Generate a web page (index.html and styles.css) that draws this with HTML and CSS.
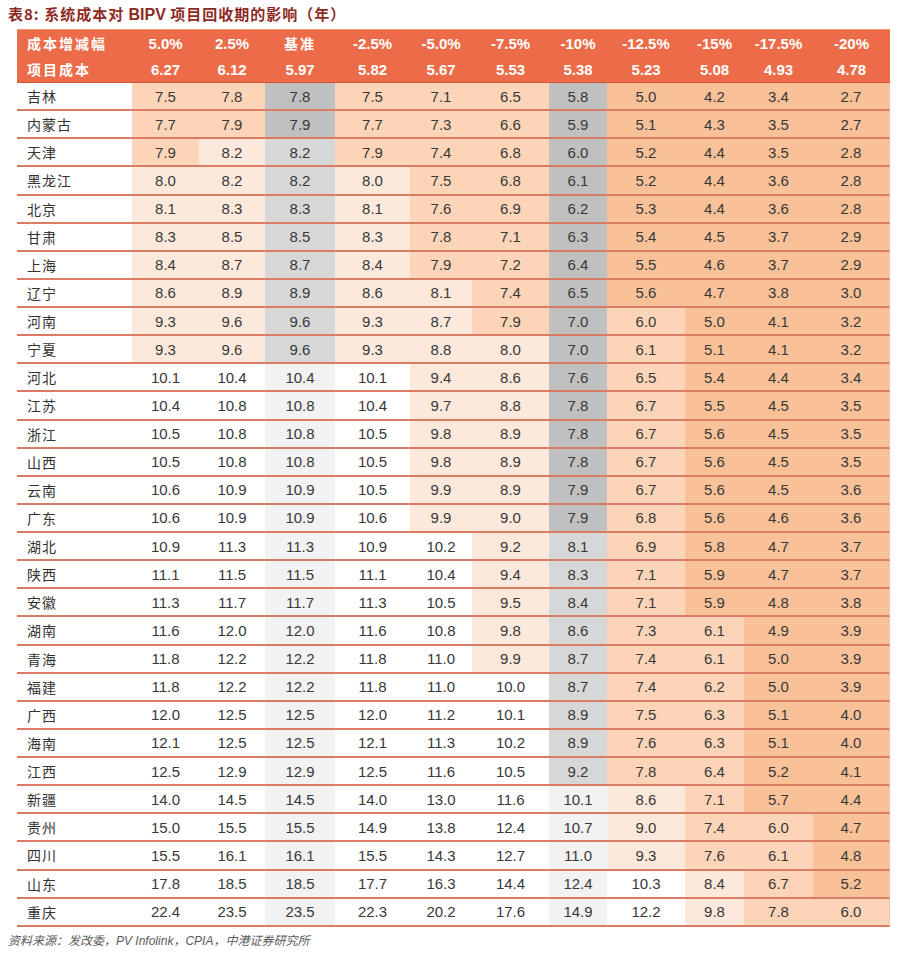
FILE: index.html
```html
<!DOCTYPE html>
<html lang="zh-CN">
<head>
<meta charset="utf-8">
<title>表8：系统成本对BIPV项目回收期的影响</title>
<link rel="stylesheet" href="styles.css">
</head>
<body>
<div class="page">
  <h1 class="title">表8: 系统成本对 <span class="latin">BIPV</span> 项目回收期的影响（年）</h1>
  <table class="heat">
    <colgroup>
      <col class="w-name"><col class="w1"><col class="w2"><col class="w3"><col class="w4"><col class="w5"><col class="w6"><col class="w7"><col class="w8"><col class="w9"><col class="w10"><col class="w11">
    </colgroup>
    <thead>
      <tr class="h1"><th class="label">成本增减幅</th><th>5.0%</th><th>2.5%</th><th class="cjk">基准</th><th>-2.5%</th><th>-5.0%</th><th>-7.5%</th><th>-10%</th><th>-12.5%</th><th>-15%</th><th>-17.5%</th><th>-20%</th></tr>
      <tr class="h2"><th class="label">项目成本</th><th>6.27</th><th>6.12</th><th>5.97</th><th>5.82</th><th>5.67</th><th>5.53</th><th>5.38</th><th>5.23</th><th>5.08</th><th>4.93</th><th>4.78</th></tr>
    </thead>
    <tbody>
      <tr><td class="name">吉林</td><td class="t2">7.5</td><td class="t2">7.8</td><td class="g1">7.8</td><td class="t2">7.5</td><td class="t2">7.1</td><td class="t2">6.5</td><td class="g1">5.8</td><td class="t1">5.0</td><td class="t1">4.2</td><td class="t1">3.4</td><td class="t1">2.7</td></tr>
      <tr><td class="name">内蒙古</td><td class="t2">7.7</td><td class="t2">7.9</td><td class="g1">7.9</td><td class="t2">7.7</td><td class="t2">7.3</td><td class="t2">6.6</td><td class="g1">5.9</td><td class="t1">5.1</td><td class="t1">4.3</td><td class="t1">3.5</td><td class="t1">2.7</td></tr>
      <tr><td class="name">天津</td><td class="t2">7.9</td><td class="t3">8.2</td><td class="g2">8.2</td><td class="t2">7.9</td><td class="t2">7.4</td><td class="t2">6.8</td><td class="g1">6.0</td><td class="t1">5.2</td><td class="t1">4.4</td><td class="t1">3.5</td><td class="t1">2.8</td></tr>
      <tr><td class="name">黑龙江</td><td class="t3">8.0</td><td class="t3">8.2</td><td class="g2">8.2</td><td class="t3">8.0</td><td class="t2">7.5</td><td class="t2">6.8</td><td class="g1">6.1</td><td class="t1">5.2</td><td class="t1">4.4</td><td class="t1">3.6</td><td class="t1">2.8</td></tr>
      <tr><td class="name">北京</td><td class="t3">8.1</td><td class="t3">8.3</td><td class="g2">8.3</td><td class="t3">8.1</td><td class="t2">7.6</td><td class="t2">6.9</td><td class="g1">6.2</td><td class="t1">5.3</td><td class="t1">4.4</td><td class="t1">3.6</td><td class="t1">2.8</td></tr>
      <tr><td class="name">甘肃</td><td class="t3">8.3</td><td class="t3">8.5</td><td class="g2">8.5</td><td class="t3">8.3</td><td class="t2">7.8</td><td class="t2">7.1</td><td class="g1">6.3</td><td class="t1">5.4</td><td class="t1">4.5</td><td class="t1">3.7</td><td class="t1">2.9</td></tr>
      <tr><td class="name">上海</td><td class="t3">8.4</td><td class="t3">8.7</td><td class="g2">8.7</td><td class="t3">8.4</td><td class="t2">7.9</td><td class="t2">7.2</td><td class="g1">6.4</td><td class="t1">5.5</td><td class="t1">4.6</td><td class="t1">3.7</td><td class="t1">2.9</td></tr>
      <tr><td class="name">辽宁</td><td class="t3">8.6</td><td class="t3">8.9</td><td class="g2">8.9</td><td class="t3">8.6</td><td class="t3">8.1</td><td class="t2">7.4</td><td class="g1">6.5</td><td class="t1">5.6</td><td class="t1">4.7</td><td class="t1">3.8</td><td class="t1">3.0</td></tr>
      <tr><td class="name">河南</td><td class="t3">9.3</td><td class="t3">9.6</td><td class="g2">9.6</td><td class="t3">9.3</td><td class="t3">8.7</td><td class="t2">7.9</td><td class="g1">7.0</td><td class="t2">6.0</td><td class="t1">5.0</td><td class="t1">4.1</td><td class="t1">3.2</td></tr>
      <tr><td class="name">宁夏</td><td class="t3">9.3</td><td class="t3">9.6</td><td class="g2">9.6</td><td class="t3">9.3</td><td class="t3">8.8</td><td class="t3">8.0</td><td class="g1">7.0</td><td class="t2">6.1</td><td class="t1">5.1</td><td class="t1">4.1</td><td class="t1">3.2</td></tr>
      <tr><td class="name">河北</td><td>10.1</td><td>10.4</td><td class="g3">10.4</td><td>10.1</td><td class="t3">9.4</td><td class="t3">8.6</td><td class="g1">7.6</td><td class="t2">6.5</td><td class="t1">5.4</td><td class="t1">4.4</td><td class="t1">3.4</td></tr>
      <tr><td class="name">江苏</td><td>10.4</td><td>10.8</td><td class="g3">10.8</td><td>10.4</td><td class="t3">9.7</td><td class="t3">8.8</td><td class="g1">7.8</td><td class="t2">6.7</td><td class="t1">5.5</td><td class="t1">4.5</td><td class="t1">3.5</td></tr>
      <tr><td class="name">浙江</td><td>10.5</td><td>10.8</td><td class="g3">10.8</td><td>10.5</td><td class="t3">9.8</td><td class="t3">8.9</td><td class="g1">7.8</td><td class="t2">6.7</td><td class="t1">5.6</td><td class="t1">4.5</td><td class="t1">3.5</td></tr>
      <tr><td class="name">山西</td><td>10.5</td><td>10.8</td><td class="g3">10.8</td><td>10.5</td><td class="t3">9.8</td><td class="t3">8.9</td><td class="g1">7.8</td><td class="t2">6.7</td><td class="t1">5.6</td><td class="t1">4.5</td><td class="t1">3.5</td></tr>
      <tr><td class="name">云南</td><td>10.6</td><td>10.9</td><td class="g3">10.9</td><td>10.5</td><td class="t3">9.9</td><td class="t3">8.9</td><td class="g1">7.9</td><td class="t2">6.7</td><td class="t1">5.6</td><td class="t1">4.5</td><td class="t1">3.6</td></tr>
      <tr><td class="name">广东</td><td>10.6</td><td>10.9</td><td class="g3">10.9</td><td>10.6</td><td class="t3">9.9</td><td class="t3">9.0</td><td class="g1">7.9</td><td class="t2">6.8</td><td class="t1">5.6</td><td class="t1">4.6</td><td class="t1">3.6</td></tr>
      <tr><td class="name">湖北</td><td>10.9</td><td>11.3</td><td class="g3">11.3</td><td>10.9</td><td>10.2</td><td class="t3">9.2</td><td class="g2">8.1</td><td class="t2">6.9</td><td class="t1">5.8</td><td class="t1">4.7</td><td class="t1">3.7</td></tr>
      <tr><td class="name">陕西</td><td>11.1</td><td>11.5</td><td class="g3">11.5</td><td>11.1</td><td>10.4</td><td class="t3">9.4</td><td class="g2">8.3</td><td class="t2">7.1</td><td class="t1">5.9</td><td class="t1">4.7</td><td class="t1">3.7</td></tr>
      <tr><td class="name">安徽</td><td>11.3</td><td>11.7</td><td class="g3">11.7</td><td>11.3</td><td>10.5</td><td class="t3">9.5</td><td class="g2">8.4</td><td class="t2">7.1</td><td class="t1">5.9</td><td class="t1">4.8</td><td class="t1">3.8</td></tr>
      <tr><td class="name">湖南</td><td>11.6</td><td>12.0</td><td class="g3">12.0</td><td>11.6</td><td>10.8</td><td class="t3">9.8</td><td class="g2">8.6</td><td class="t2">7.3</td><td class="t2">6.1</td><td class="t1">4.9</td><td class="t1">3.9</td></tr>
      <tr><td class="name">青海</td><td>11.8</td><td>12.2</td><td class="g3">12.2</td><td>11.8</td><td>11.0</td><td class="t3">9.9</td><td class="g2">8.7</td><td class="t2">7.4</td><td class="t2">6.1</td><td class="t1">5.0</td><td class="t1">3.9</td></tr>
      <tr><td class="name">福建</td><td>11.8</td><td>12.2</td><td class="g3">12.2</td><td>11.8</td><td>11.0</td><td>10.0</td><td class="g2">8.7</td><td class="t2">7.4</td><td class="t2">6.2</td><td class="t1">5.0</td><td class="t1">3.9</td></tr>
      <tr><td class="name">广西</td><td>12.0</td><td>12.5</td><td class="g3">12.5</td><td>12.0</td><td>11.2</td><td>10.1</td><td class="g2">8.9</td><td class="t2">7.5</td><td class="t2">6.3</td><td class="t1">5.1</td><td class="t1">4.0</td></tr>
      <tr><td class="name">海南</td><td>12.1</td><td>12.5</td><td class="g3">12.5</td><td>12.1</td><td>11.3</td><td>10.2</td><td class="g2">8.9</td><td class="t2">7.6</td><td class="t2">6.3</td><td class="t1">5.1</td><td class="t1">4.0</td></tr>
      <tr><td class="name">江西</td><td>12.5</td><td>12.9</td><td class="g3">12.9</td><td>12.5</td><td>11.6</td><td>10.5</td><td class="g2">9.2</td><td class="t2">7.8</td><td class="t2">6.4</td><td class="t1">5.2</td><td class="t1">4.1</td></tr>
      <tr><td class="name">新疆</td><td>14.0</td><td>14.5</td><td class="g3">14.5</td><td>14.0</td><td>13.0</td><td>11.6</td><td class="g3">10.1</td><td class="t3">8.6</td><td class="t2">7.1</td><td class="t1">5.7</td><td class="t1">4.4</td></tr>
      <tr><td class="name">贵州</td><td>15.0</td><td>15.5</td><td class="g3">15.5</td><td>14.9</td><td>13.8</td><td>12.4</td><td class="g3">10.7</td><td class="t3">9.0</td><td class="t2">7.4</td><td class="t2">6.0</td><td class="t1">4.7</td></tr>
      <tr><td class="name">四川</td><td>15.5</td><td>16.1</td><td class="g3">16.1</td><td>15.5</td><td>14.3</td><td>12.7</td><td class="g3">11.0</td><td class="t3">9.3</td><td class="t2">7.6</td><td class="t2">6.1</td><td class="t1">4.8</td></tr>
      <tr><td class="name">山东</td><td>17.8</td><td>18.5</td><td class="g3">18.5</td><td>17.7</td><td>16.3</td><td>14.4</td><td class="g3">12.4</td><td>10.3</td><td class="t3">8.4</td><td class="t2">6.7</td><td class="t1">5.2</td></tr>
      <tr><td class="name">重庆</td><td>22.4</td><td>23.5</td><td class="g3">23.5</td><td>22.3</td><td>20.2</td><td>17.6</td><td class="g3">14.9</td><td>12.2</td><td class="t3">9.8</td><td class="t2">7.8</td><td class="t2">6.0</td></tr>
    </tbody>
  </table>
  <p class="source">资料来源：发改委，<span class="latin">PV Infolink</span>，<span class="latin">CPIA</span>，中港证券研究所</p>
</div>
</body>
</html>
```

FILE: styles.css
```css
html, body {
  margin: 0;
  padding: 0;
  background: #ffffff;
}

.page {
  width: 900px;
  padding-left: 8px;
  box-sizing: border-box;
  font-family: "Liberation Sans", "Noto Sans CJK SC", sans-serif;
}

.title {
  margin: 0;
  height: 29px;
  line-height: 28px;
  font-size: 15px;
  font-weight: 700;
  color: #8e2a24;
  letter-spacing: 1px;
  font-family: "Noto Sans CJK SC", "Liberation Sans", sans-serif;
}

.title .latin {
  font-family: "Liberation Sans", sans-serif;
  letter-spacing: 0;
  font-size: 16px;
}

.heat {
  margin-left: 9px;
  width: 873px;
  table-layout: fixed;
  border-collapse: separate;
  border-spacing: 0;
  font-size: 15px;
  color: #383838;
}

.w-name { width: 115px; }
.w1 { width: 67px; }
.w2 { width: 66px; }
.w3 { width: 70px; }
.w4 { width: 75px; }
.w5 { width: 62px; }
.w6 { width: 77px; }
.w7 { width: 58px; }
.w8 { width: 78px; }
.w9 { width: 59px; }
.w10 { width: 69px; }
.w11 { width: 77px; }

.heat thead th {
  background: #ec6b48;
  color: #ffffff;
  font-weight: 700;
  font-size: 15px;
  padding: 0;
  text-align: center;
}

.heat thead tr.h1 { height: 27px; }
.heat thead tr.h1 th { border-top: 1px solid #f09a80; }
.heat thead tr.h2 { height: 27px; }
.heat thead tr.h2 th { border-bottom: 1px solid #cf5536; }

.heat thead th.label {
  text-align: left;
  padding-left: 10px;
  font-family: "Noto Sans CJK SC", sans-serif;
  font-size: 14px;
  letter-spacing: 2px;
}

.heat thead th.cjk {
  font-family: "Noto Sans CJK SC", sans-serif;
  font-size: 14px;
  letter-spacing: 2px;
}

.heat tbody tr { height: 28.13px; }

.heat tbody td {
  padding: 0;
  text-align: center;
  border-bottom: 2px solid #da7c63;
}

.heat tbody td:last-child {
  border-right: 1px solid #f4c3ae;
}

.heat tbody td.name {
  text-align: left;
  padding-left: 10px;
  font-family: "Noto Sans CJK SC", sans-serif;
  font-size: 14px;
  letter-spacing: 1px;
  color: #333333;
}

.t1 { background: #f9c197; }
.t2 { background: #fcd5b8; }
.t3 { background: #fde9dc; }
.g1 { background: #c0c0c0; }
.g2 { background: #d7d7d7; }
.g3 { background: #f2f2f2; }

.source {
  margin: 5px 0 0 0;
  line-height: 16px;
  font-size: 12px;
  font-style: italic;
  color: #5a5a5a;
  font-family: "Noto Sans CJK SC", sans-serif;
}

.source .latin {
  font-family: "Liberation Sans", sans-serif;
}
```
